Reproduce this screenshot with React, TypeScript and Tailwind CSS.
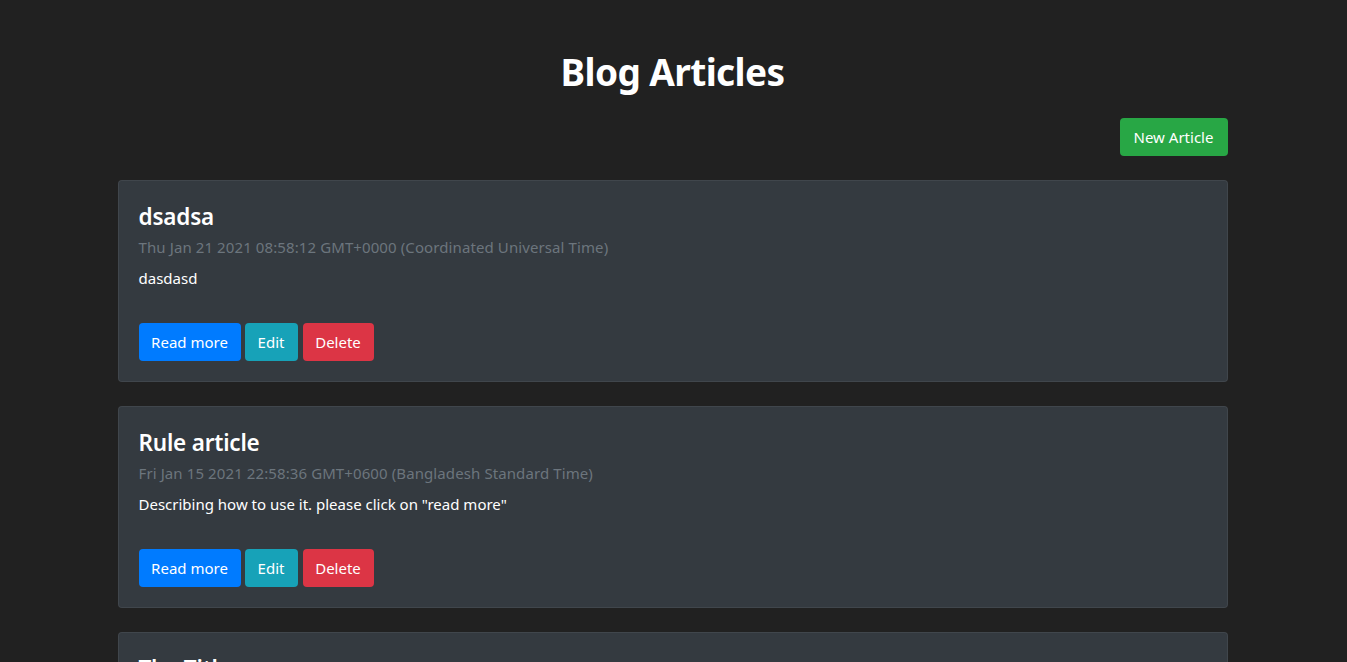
const articles = [
  {
    title: "dsadsa",
    date: "Thu Jan 21 2021 08:58:12 GMT+0000 (Coordinated Universal Time)",
    body: "dasdasd",
  },
  {
    title: "Rule article",
    date: "Fri Jan 15 2021 22:58:36 GMT+0600 (Bangladesh Standard Time)",
    body: 'Describing how to use it. please click on "read more"',
  },
  {
    title: "The Title",
    date: "Fri Jan 15 2021 20:11:04 GMT+0600 (Bangladesh Standard Time)",
    body: "Some description",
  },
];

const App = () => {
  return (
    <div className="min-h-screen bg-[#212121] text-white font-['Noto_Sans',sans-serif]">
      <div className="mx-auto max-w-[1140px] pl-[14px] pr-[16px] pt-[48px]">
        <h1 className="text-center text-[37px] font-bold leading-[48px] tracking-[-0.6px]">Blog Articles</h1>

        <div className="mt-[22px] mb-[24px] flex justify-end">
          <button className="h-[38px] w-[108px] rounded-[4px] bg-[#28a745] text-[15px] leading-[24px] text-white">
            New Article
          </button>
        </div>

        {articles.map((article, index) => (
          <div
            key={index}
            className="mb-[24px] rounded-[4px] border border-[#ffffff10] bg-[#343a40] px-[20px] pt-[21px] pb-[20px]"
          >
            <h4 className="text-[22.5px] font-semibold leading-[29px] tracking-[-0.2px] mb-[7px]">{article.title}</h4>
            <h6 className="text-[15px] leading-[19px] tracking-[0.1px] text-[#6c757d] mb-[9px]">{article.date}</h6>
            <p className="text-[15px] leading-[24px]">{article.body}</p>

            <div className="mt-[33px] flex">
              <button className="h-[38px] w-[102px] rounded-[4px] bg-[#007bff] text-[15px] text-white">
                Read more
              </button>
              <button className="ml-[4px] h-[38px] w-[53px] rounded-[4px] bg-[#17a2b8] text-[15px] text-white">
                Edit
              </button>
              <button className="ml-[5px] h-[38px] w-[71px] rounded-[4px] bg-[#dc3545] text-[15px] text-white">
                Delete
              </button>
            </div>
          </div>
        ))}
      </div>
    </div>
  );
};

export default App;
